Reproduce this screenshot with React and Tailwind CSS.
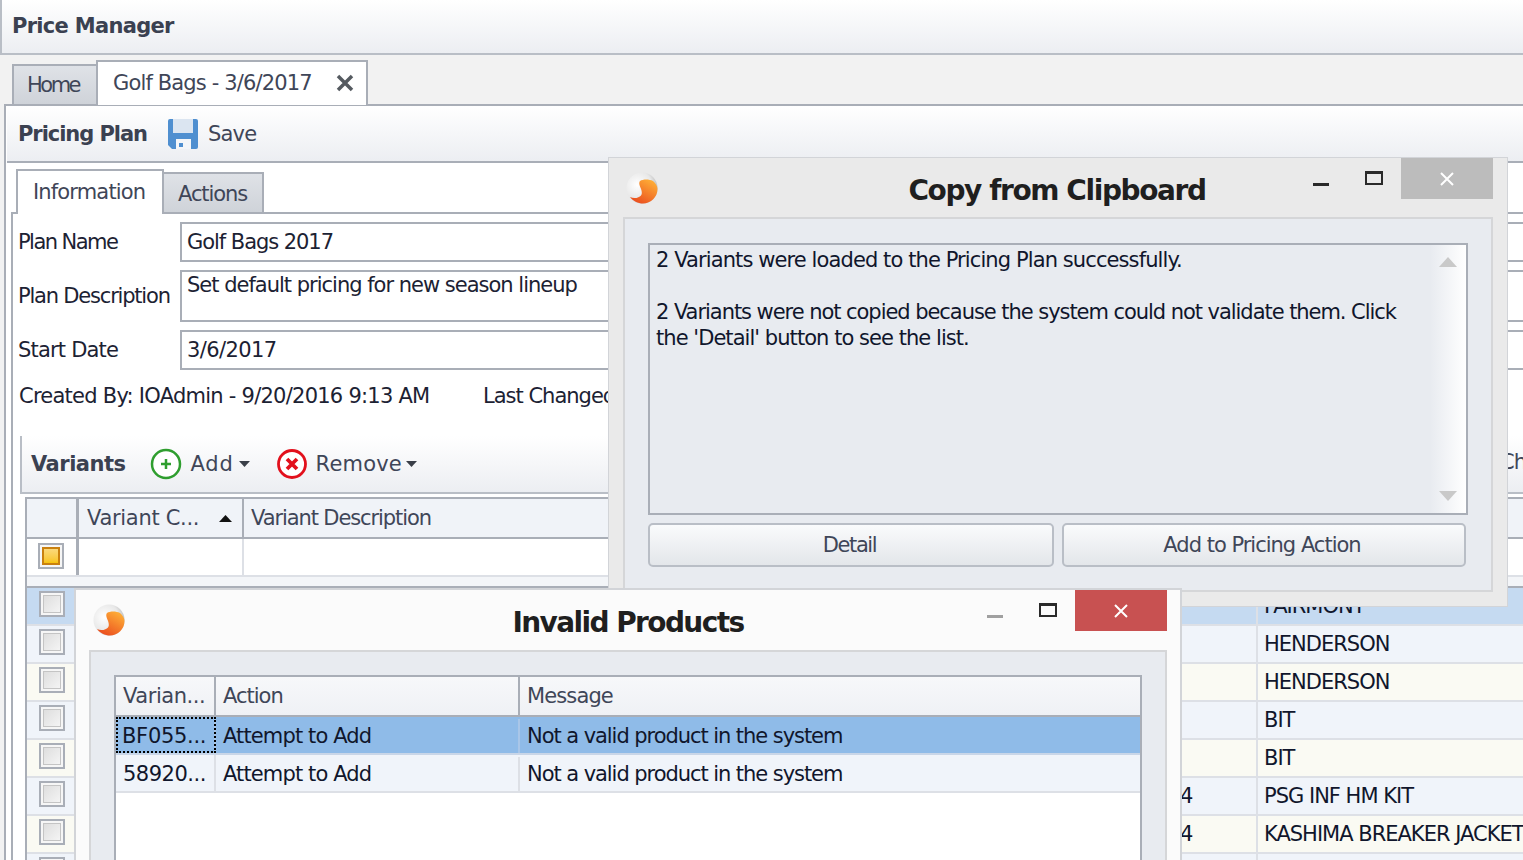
const F = "[font-family:'DejaVu_Sans',sans-serif]";

function Logo() {
  return (
    <svg className="blur-[0.4px]" width="32" height="32" viewBox="0 0 32 32">
      <defs>
        <radialGradient id="sph" cx="0.35" cy="0.4" r="0.7">
          <stop offset="0" stopColor="#ffffff" />
          <stop offset="0.65" stopColor="#e8e8e8" />
          <stop offset="1" stopColor="#b5b5b5" />
        </radialGradient>
        <linearGradient id="org" x1="0.8" y1="0.1" x2="0.2" y2="1">
          <stop offset="0" stopColor="#fda935" />
          <stop offset="1" stopColor="#ea4a1e" />
        </linearGradient>
      </defs>
      <circle cx="16" cy="16" r="15.5" fill="url(#sph)" />
      <path d="M14 9C17 7 23 7 27 9C29.500 11 31.500 14 31.500 17C31.500 25 25 31.500 17 31.500C12 31.500 7 29 4 25C8 27 13 26 15 23.500C17 21 15 17 14 14.500C13 12 13 10 14 9z" fill="url(#org)" />
    </svg>
  );
}

function Check({ on }) {
  return (
    <div className="w-[26px] h-[26px] border-[2px] border-[#a9aeb7] bg-[#f6f6f6] flex items-center justify-center">
      {on ? (
        <div className="w-[18px] h-[18px] border-[2px] border-[#c9800f] bg-gradient-to-b from-[#fbd97a] to-[#f8c400]" />
      ) : (
        <div className="w-[18px] h-[18px] border border-[#c4c4c4] bg-gradient-to-br from-[#dedede] to-[#f4f4f4]" />
      )}
    </div>
  );
}

function Field({ label, value, h, mt, top, labelTrack, valueTrack }) {
  return (
    <div className={`flex ${mt}`}>
      <div className={`w-[167px] shrink-0 pl-[5px] text-[#1c2233] flex items-center ${labelTrack}`}>{label}</div>
      <div className={`w-[1500px] shrink-0 ${h} border-[2px] border-[#a9aeb7] bg-white pl-[5px] text-[#1c2233] ${valueTrack} ${top ? "pt-[3px]" : "flex items-center"}`}>{value}</div>
    </div>
  );
}

const rows = [
  ["sel", "", "FAIRMONT"],
  ["a", "", "HENDERSON"],
  ["b", "", "HENDERSON"],
  ["a", "", "BIT"],
  ["b", "", "BIT"],
  ["a", "4", "PSG INF HM KIT"],
  ["b", "4", "KASHIMA BREAKER JACKET"],
  ["a", "", ""],
];

function GridRow({ kind, mid, last }) {
  const bg = kind === "sel" ? "bg-[#c5daf1]" : kind === "a" ? "bg-[#f0f4fa]" : "bg-[#fafaf3]";
  return (
    <div className={`flex h-[38px] shrink-0 border-b-[2px] border-[#dde0e6] ${bg}`}>
      <div className="w-[52px] shrink-0 flex items-center justify-center border-r-[2px] border-[#a9aeb7] pb-[4px] pr-[1px]">
        <Check />
      </div>
      <div className="w-[1100px] shrink-0" />
      <div className="w-[79px] shrink-0 border-r-[2px] border-[#dde0e6] pl-[1px] pt-[1px] flex items-center text-[#10162c]">{mid}</div>
      <div className="w-[300px] shrink-0 pl-[6px] pt-[1px] flex items-center text-[#10162c] whitespace-nowrap overflow-hidden">{last}</div>
    </div>
  );
}

function CloseX({ size = 14 }) {
  return (
    <svg width={size} height={size} viewBox="0 0 14 14">
      <path d="M1 1L13 13M13 1L1 13" stroke="#fff" strokeWidth="2" />
    </svg>
  );
}

function WinButtons({ closeBg, minColor, gapClass }) {
  return (
    <>
      <div className={`h-[3px] w-[16px] ${minColor}`} />
      <div className={`w-[18px] h-[14px] border-[2px] border-t-[3px] border-[#2a2a2a] ${gapClass}`} />
      <div className={`w-[92px] h-[41px] flex items-center justify-center ${closeBg}`}>
        <CloseX />
      </div>
    </>
  );
}

export default function App() {
  return (
    <div className={`relative w-[1523px] h-[860px] overflow-hidden bg-[#f2f2f2] text-[21px] leading-none tracking-[-1px] ${F}`}>
      {/* title */}
      <div className="h-[55px] border-b-[2px] border-l-[2px] border-[#b9bec6] bg-gradient-to-b from-white to-[#eceef2] pl-[10px] flex items-center">
        <span className="font-bold text-[#3b4151] text-[21px] tracking-[-0.7px]">Price Manager</span>
      </div>
      {/* doc tabs */}
      <div className="h-[49px] flex items-end pl-[12px] relative z-10">
        <div className="w-[84px] h-[40px] border-[2px] border-b-0 border-r-0 border-[#a9aeb7] bg-gradient-to-b from-[#dfe2e7] to-[#cfd3d9] flex items-center pl-[13px] text-[#3f4658] tracking-[-2.5px]">Home</div>
        <div className="w-[272px] h-[45px] -mb-[1px] border-[2px] border-b-0 border-[#a9aeb7] bg-white flex items-center pl-[15px] text-[#3f4658] pb-[1px]">
          <span className="tracking-[-0.85px]">Golf Bags - 3/6/2017</span>
          <svg className="ml-[24px]" width="18" height="18" viewBox="0 0 18 18">
            <path d="M2 2L16 16M16 2L2 16" stroke="#555a60" strokeWidth="3.500" />
          </svg>
        </div>
      </div>
      {/* doc panel */}
      <div className="ml-[4px] h-[756px] border-l-[2px] border-t-[2px] border-[#a9aeb7] bg-white">
        <div className="h-[57px] ml-[1px] border-b-[2px] border-[#a9aeb7] bg-gradient-to-b from-white to-[#eceef2] flex items-center pl-[11px] pt-[1px]">
          <span className="font-bold text-[#3b4151] tracking-[-1.05px]">Pricing Plan</span>
          <svg className="ml-[20px]" width="32" height="32" viewBox="0 0 32 32">
            <path d="M1 3q0-2 2-2h26q2 0 2 2v26q0 2-2 2H5l-4-4z" fill="#4f8fd0" />
            <rect x="6" y="1" width="20" height="14" fill="#dbe5f1" />
            <rect x="9" y="21" width="15" height="10" fill="#f4f6f9" />
            <rect x="12" y="25" width="4" height="4" fill="#4f8fd0" />
          </svg>
          <span className="ml-[9px] text-[#3f4658] tracking-[-0.8px]">Save</span>
        </div>
        {/* inner tabs */}
        <div className="h-[49px] pl-[10px] flex items-end">
          <div className="w-[148px] h-[45px] border-[2px] border-b-0 border-[#a9aeb7] bg-white flex items-center pl-[15px] text-[#3f4658] pb-[1px] relative z-10 -mb-[2px] tracking-[-0.85px]">Information</div>
          <div className="w-[100px] h-[40px] border-[2px] border-l-0 border-b-0 border-[#a9aeb7] bg-gradient-to-b from-[#dfe2e7] to-[#cfd3d9] flex items-center pl-[14px] pt-[2px] text-[#3f4658] tracking-[-1.1px]">Actions</div>
        </div>
        <div className="ml-[5px] h-[660px] border-l-[2px] border-t-[2px] border-[#a9aeb7] overflow-hidden">
          <div className="pt-[8px]">
            <Field label="Plan Name" value="Golf Bags 2017" h="h-[40px]" labelTrack="tracking-[-1.55px]" valueTrack="tracking-[-1.05px]" />
            <Field label="Plan Description" value="Set default pricing for new season lineup" h="h-[52px]" mt="mt-[8px]" top labelTrack="tracking-[-1.2px]" valueTrack="tracking-[-1px]" />
            <Field label="Start Date" value="3/6/2017" h="h-[40px]" mt="mt-[8px]" labelTrack="tracking-[-0.8px]" valueTrack="tracking-[-0.6px]" />
          </div>
          <div className="flex pl-[6px] mt-[16px] text-[#1c2233] whitespace-nowrap">
            <span className="w-[464px] tracking-[-0.75px]">Created By: IOAdmin - 9/20/2016 9:13 AM</span>
            <span>Last Changed By: IOAdmin - 3/6/2017 9:20 AM</span>
          </div>
          {/* variants toolbar */}
          <div className="ml-[7px] mt-[29px] h-[58px] border-l-[2px] border-b-[2px] border-[#b9bec6] bg-gradient-to-b from-white to-[#eceef2] flex items-center pl-[9px] relative">
            <span className="font-bold text-[#3b4151] tracking-[-0.5px]">Variants</span>
            <svg className="ml-[24px]" width="32" height="32" viewBox="0 0 32 32">
              <circle cx="16" cy="16" r="14" fill="#fff" stroke="#2f9e2f" strokeWidth="2.500" />
              <path d="M16 11v10M11 16h10" stroke="#2f9e2f" strokeWidth="2.500" />
            </svg>
            <span className="ml-[9px] text-[#3f4658] tracking-[0.8px]">Add</span>
            <svg className="ml-[5px]" width="12" height="6" viewBox="0 0 12 6"><path d="M0 0h11L5.500 6z" fill="#3a3f48" /></svg>
            <svg className="ml-[25px]" width="32" height="32" viewBox="0 0 32 32">
              <circle cx="16" cy="16" r="13.500" fill="#fff" stroke="#e2101c" strokeWidth="2.800" />
              <path d="M11 11L21 21M21 11L11 21" stroke="#e2101c" strokeWidth="3.800" />
            </svg>
            <span className="ml-[8px] text-[#3f4658] tracking-[0.2px]">Remove</span>
            <svg className="ml-[4px]" width="12" height="6" viewBox="0 0 12 6"><path d="M0 0h11L5.500 6z" fill="#3a3f48" /></svg>
            <span className="absolute left-[1478px] top-[16px] text-[#3f4658]">Ch</span>
          </div>
          {/* grid */}
          <div className="ml-[12px] mt-[3px] border-l-[2px] border-t-[2px] border-[#a9aeb7] w-[1510px]">
            <div className="flex h-[40px] border-b-[2px] border-[#a9aeb7] bg-[#f0f3f8]">
              <div className="w-[52px] shrink-0 border-r-[3px] border-[#a9aeb7]" />
              <div className="w-[165px] shrink-0 border-r-[2px] border-[#a9aeb7] flex items-center pl-[8px] text-[#3f4658]">
                <span className="tracking-[-0.3px]">Variant C...</span>
                <svg className="ml-[20px]" width="13" height="7" viewBox="0 0 13 7"><path d="M0 7h13L6.500 0z" fill="#111" /></svg>
              </div>
              <div className="flex-1 flex items-center pl-[7px] text-[#3f4658] tracking-[-1.1px]">Variant Description</div>
            </div>
            <div className="flex h-[38px] bg-white border-b-[2px] border-[#dde0e6]">
              <div className="w-[52px] shrink-0 border-r-[3px] border-[#a9aeb7] flex items-center justify-center pb-[2px] pr-[1px]">
                <Check on />
              </div>
              <div className="w-[165px] shrink-0 border-r-[2px] border-[#dde0e6]" />
            </div>
            <div className="h-[11px] bg-[#f3f5f8] border-b-[2px] border-[#a9aeb7]" />
            {rows.map((r, i) => (
              <GridRow key={i} kind={r[0]} mid={r[1]} last={r[2]} />
            ))}
          </div>
        </div>
      </div>

      {/* Copy dialog */}
      <div className="absolute left-[608px] top-[157px] w-[900px] h-[450px] border border-[#d2d4d8] bg-[#eaeaea] z-20 flex flex-col">
        <div className="h-[59px] shrink-0 relative flex items-center justify-center">
          <div className="absolute left-[17px] top-[14px]"><Logo /></div>
          <span className="font-bold text-[28px] tracking-[-1.4px] text-[#1f1f1f] ml-[-2px] mt-[6px]">Copy from Clipboard</span>
          <div className="absolute right-[14px] top-0 flex items-center h-[41px]">
            <WinButtons closeBg="bg-[#bcbcbc]" minColor="bg-[#2a2a2a] mt-[12px]" gapClass="ml-[36px] mr-[18px] -mt-[2px]" />
          </div>
        </div>
        <div className="mx-[14px] h-[375px] border-[2px] border-[#d5d6d8] bg-[#e8ebf0] px-[23px] pt-[24px]">
          <div className="relative h-[272px] border-[2px] border-[#a9aeb7] pl-[6px] pt-[2px] leading-[26px] text-[#10162c] whitespace-nowrap">
            <p className="tracking-[-0.9px]">2 Variants were loaded to the Pricing Plan successfully.</p>
            <p className="mt-[26px] tracking-[-1.05px]">2 Variants were not copied because the system could not validate them. Click</p>
            <p className="tracking-[-0.95px]">the 'Detail' button to see the list.</p>
            <div className="absolute right-0 top-0 bottom-0 w-[36px] bg-gradient-to-r from-[#e8ebf0] to-white">
              <svg className="absolute left-[9px] top-[12px]" width="18" height="10" viewBox="0 0 18 10"><path d="M0 10h18L9 0z" fill="#c9c9c9" /></svg>
              <svg className="absolute left-[9px] bottom-[12px]" width="18" height="10" viewBox="0 0 18 10"><path d="M0 0h18L9 10z" fill="#c9c9c9" /></svg>
            </div>
          </div>
          <div className="flex gap-[8px] mt-[8px] text-[#3f4658]">
            <div className="w-[406px] h-[44px] rounded-[5px] border-[2px] border-[#b9bec6] bg-gradient-to-b from-[#fafbfc] to-[#e3e6ea] flex items-center justify-center tracking-[-1.4px] pr-[3px]">Detail</div>
            <div className="w-[404px] h-[44px] rounded-[5px] border-[2px] border-[#b9bec6] bg-gradient-to-b from-[#fafbfc] to-[#e3e6ea] flex items-center justify-center pr-[4px]">Add to Pricing Action</div>
          </div>
        </div>
      </div>

      {/* Invalid dialog */}
      <div className="absolute left-[74px] top-[588px] w-[1108px] h-[280px] border-[2px] border-[#d2d4d8] bg-[#fbfbfb] z-30">
        <div className="h-[60px] relative flex items-center justify-center">
          <div className="absolute left-[17px] top-[14px]"><Logo /></div>
          <span className="font-bold text-[28px] tracking-[-1.6px] text-[#1f1f1f] mt-[5px]">Invalid Products</span>
          <div className="absolute right-[13px] top-0 flex items-center h-[41px]">
            <WinButtons closeBg="bg-[#c85151]" minColor="bg-[#a0a0a0] mt-[12px]" gapClass="ml-[36px] mr-[18px] -mt-[2px]" />
          </div>
        </div>
        <div className="ml-[13px] mr-[13px] h-[230px] border-[2px] border-[#d5d6d8] bg-[#e8ebf0] px-[23px] pt-[23px]">
          <div className="h-[210px] border-[2px] border-[#a9aeb7] bg-white tracking-[-0.88px]">
            <div className="flex h-[40px] border-b-[2px] border-[#a9aeb7] bg-gradient-to-b from-[#f7f8fa] to-[#eff1f5] text-[#3f4658]">
              <div className="w-[100px] border-r-[2px] border-[#a9aeb7] flex items-center pl-[7px] tracking-[-0.45px]">Varian...</div>
              <div className="w-[304px] border-r-[2px] border-[#a9aeb7] flex items-center pl-[7px] tracking-[-1px]">Action</div>
              <div className="flex-1 flex items-center pl-[7px]">Message</div>
            </div>
            <div className="flex h-[38px] border-b-[2px] border-[#c9d6e8] bg-[#8fbbe8] text-[#10162c] pt-[2px]">
              <div className="w-[100px] -mt-[2px] border-r-[2px] border-[#a9c6e8] flex items-center pl-[6px] pt-[2px] outline-[2px] outline-dotted outline-offset-[-2px] outline-black tracking-[-0.3px]">BF055...</div>
              <div className="w-[304px] border-r-[2px] border-[#a9c6e8] flex items-center pl-[7px]">Attempt to Add</div>
              <div className="flex-1 flex items-center pl-[7px] tracking-[-1.06px]">Not a valid product in the system</div>
            </div>
            <div className="flex h-[38px] border-b-[2px] border-[#dde0e6] bg-[#f0f4fa] text-[#10162c] pt-[2px]">
              <div className="w-[100px] -mt-[2px] border-r-[2px] border-[#dde0e6] flex items-center pl-[7px] pt-[2px] tracking-[-0.5px]">58920...</div>
              <div className="w-[304px] border-r-[2px] border-[#dde0e6] flex items-center pl-[7px]">Attempt to Add</div>
              <div className="flex-1 flex items-center pl-[7px] tracking-[-1.06px]">Not a valid product in the system</div>
            </div>
          </div>
        </div>
      </div>
    </div>
  );
}
